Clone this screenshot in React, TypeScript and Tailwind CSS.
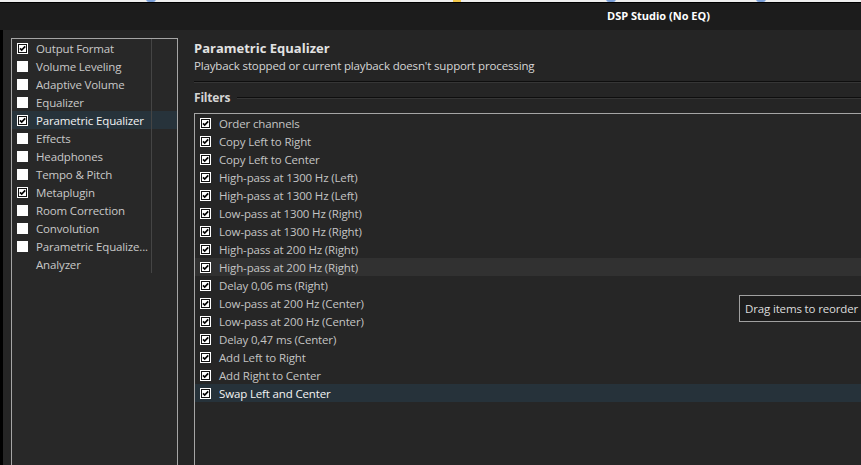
import React from "react";

const leftItems: { label: string; checked: boolean | null }[] = [
  { label: "Output Format", checked: true },
  { label: "Volume Leveling", checked: false },
  { label: "Adaptive Volume", checked: false },
  { label: "Equalizer", checked: false },
  { label: "Parametric Equalizer", checked: true },
  { label: "Effects", checked: false },
  { label: "Headphones", checked: false },
  { label: "Tempo & Pitch", checked: false },
  { label: "Metaplugin", checked: true },
  { label: "Room Correction", checked: false },
  { label: "Convolution", checked: false },
  { label: "Parametric Equalize...", checked: false },
  { label: "Analyzer", checked: null },
];

const filters = [
  "Order channels",
  "Copy Left to Right",
  "Copy Left to Center",
  "High-pass at 1300 Hz (Left)",
  "High-pass at 1300 Hz (Left)",
  "Low-pass at 1300 Hz (Right)",
  "Low-pass at 1300 Hz (Right)",
  "High-pass at 200 Hz (Right)",
  "High-pass at 200 Hz (Right)",
  "Delay 0,06 ms (Right)",
  "Low-pass at 200 Hz (Center)",
  "Low-pass at 200 Hz (Center)",
  "Delay 0,47 ms (Center)",
  "Add Left to Right",
  "Add Right to Center",
  "Swap Left and Center",
];

function Box({ checked }: { checked: boolean }) {
  return (
    <svg width="11" height="11" viewBox="0 0 11 11" className="shrink-0">
      <rect x="0" y="0" width="11" height="11" fill="#ffffff" />
      <rect x="1.5" y="1.5" width="8" height="8" fill="#ffffff" stroke={checked ? "#111111" : "#ffffff"} strokeWidth="1" />
      {checked && (
        <path d="M3 5.4 L4.7 7.1 L8.2 3.4" fill="none" stroke="#000000" strokeWidth="1.7" />
      )}
    </svg>
  );
}

export default function App() {
  return (
    <div className="relative w-[861px] h-[465px] overflow-hidden bg-[#252525] flex flex-col font-['Open_Sans',sans-serif]">
      <div className="relative h-[2px] shrink-0 bg-[#eeeeee]">
        <div className="absolute left-[146px] top-[-4px] w-[10px] h-[6px] rounded-full bg-[#7b9fd8]" />
        <div className="absolute left-[453px] top-[-2px] w-[8px] h-[4px] bg-[#f2c84b]" />
        <div className="absolute left-[606px] top-[-4px] w-[10px] h-[6px] rounded-full bg-[#7b9fd8]" />
        <div className="absolute left-[756px] top-[-4px] w-[10px] h-[6px] rounded-full bg-[#7b9fd8]" />
      </div>
      <div className="h-[1px] shrink-0 bg-black" />
      <div className="h-[27px] shrink-0 bg-[#1c1c1c] flex items-center pl-[607px] text-[11px] font-bold text-white">
        DSP Studio (No EQ)
      </div>
      <div className="flex flex-1 min-h-0">
        <div className="w-[3px] shrink-0 bg-black" />
        <div className="flex flex-1 min-w-0 pt-[8px] pl-[8px]">
          <div className="relative w-[167px] shrink-0 border border-b-0 border-[#a5a5a5] bg-[#282828]">
            <div className="absolute left-[139px] top-0 w-[1px] h-[234px] bg-[#454545]" />
            {leftItems.map((it, i) => (
              <div
                key={i}
                className={`flex items-center h-[18px] pl-[5px] text-[11.5px] tracking-[-0.15px] ${
                  i === 4 ? "bg-[#27333b] text-[#f2f2f2]" : "text-[#c9c9c9]"
                }`}
              >
                {it.checked === null ? <div className="w-[11px] shrink-0" /> : <Box checked={it.checked} />}
                <span className="ml-[8px] whitespace-nowrap leading-[18px] pt-[1px]">{it.label}</span>
              </div>
            ))}
          </div>
          <div className="flex flex-col flex-1 min-w-0 ml-[16px] pt-[2px]">
            <div className="text-[13px] font-bold leading-[16px] text-[#e2e2e2]">Parametric Equalizer</div>
            <div className="mt-[2px] text-[11.5px] tracking-[-0.15px] leading-[16px] text-[#d6d6d6]">
              Playback stopped or current playback doesn't support processing
            </div>
            <div className="mt-[7px] h-[1px] bg-[#0e0e0e]" />
            <div className="h-[1px] bg-[#363636]" />
            <div className="mt-[7px] flex items-center h-[16px]">
              <span className="text-[12px] font-bold tracking-[-0.2px] text-[#d4d4d4] leading-[16px]">Filters</span>
              <div className="ml-[7px] flex-1 flex flex-col">
                <div className="h-[1px] bg-[#0e0e0e]" />
                <div className="h-[1px] bg-[#363636]" />
              </div>
            </div>
            <div className="mt-[7px] flex-1 border border-r-0 border-b-0 border-[#a5a5a5] bg-[#262626]">
              {filters.map((f, i) => (
                <div
                  key={i}
                  className={`flex items-center h-[18px] pl-[5px] text-[11.5px] tracking-[-0.15px] ${
                    i === 15
                      ? "bg-[#26323a] text-[#f4f4f4]"
                      : i === 8
                      ? "bg-[#313131] text-[#c4c4c4]"
                      : "text-[#c4c4c4]"
                  }`}
                >
                  <Box checked={true} />
                  <span className="ml-[8px] whitespace-nowrap leading-[18px] pt-[1px]">{f}</span>
                </div>
              ))}
            </div>
          </div>
        </div>
      </div>
      <div className="absolute left-[739px] top-[295px] h-[27px] w-[140px] border border-[#a0a0a0] bg-[#1c1c1c] flex items-center pl-[5px] text-[11.5px] tracking-[-0.15px] text-[#dcdcdc] whitespace-nowrap">
        Drag items to reorder
        <span className="ml-[3px] w-[6px] h-[12px] bg-[#7a2020]" />
      </div>
    </div>
  );
}
